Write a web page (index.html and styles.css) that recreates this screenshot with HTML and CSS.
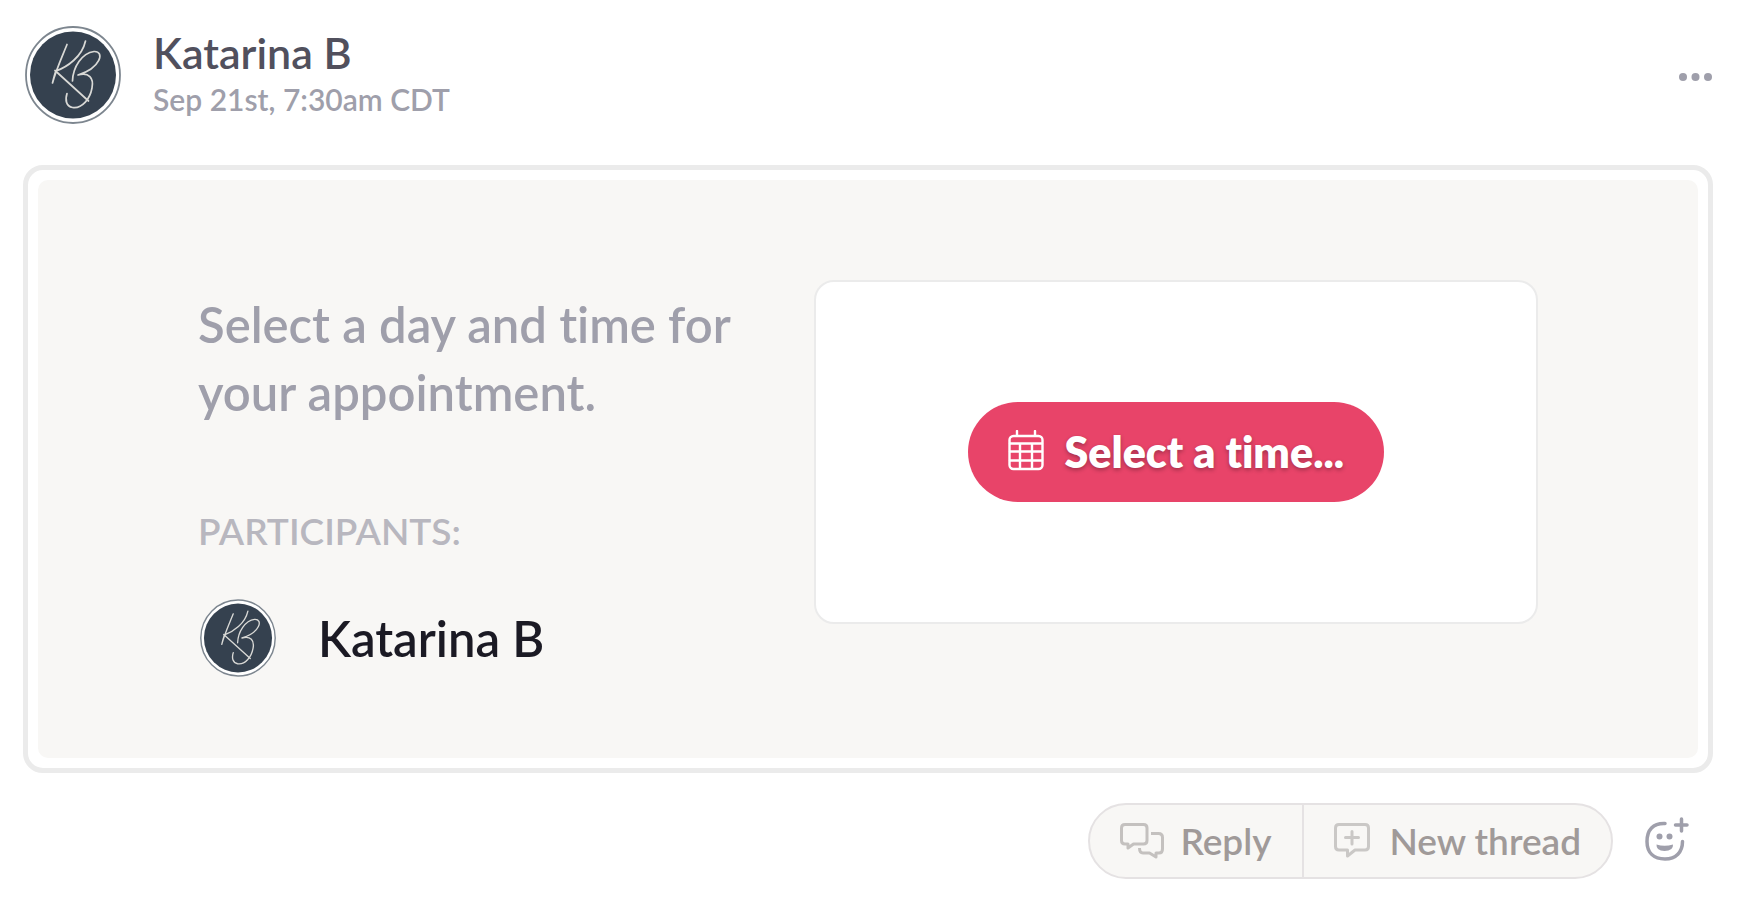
FILE: index.html
```html
<!doctype html>
<html lang="en">
<head>
    <meta charset="utf-8">
    <meta name="viewport" content="width=device-width, initial-scale=1">
    <title>Katarina B</title>
    <link rel="stylesheet" href="styles.css">
</head>
<body>
    <!-- shared monogram, used by both avatars -->
    <svg class="sprite" aria-hidden="true">
        <symbol id="monogram" viewBox="0 0 96 98">
            <ellipse cx="48" cy="49" rx="48" ry="49" fill="#fff"/>
            <ellipse cx="48" cy="49" rx="47" ry="48" fill="none" stroke="#7d868f" stroke-width="1.8"/>
            <ellipse cx="48" cy="49" rx="43" ry="43.5" fill="#35414f"/>
            <g fill="none" stroke="#d9d9d6" stroke-width="1.7" stroke-linecap="round" stroke-linejoin="round">
                <path d="M42 18.500C37 31 31 44 27.500 57C29 51 30 47 31 45C42 41 57 31 60.500 15"/>
                <path d="M30 44.500L63.500 75"/>
                <path d="M47.500 55C48 41 57 27 69 25.500C80 25 76 42 53 49C64 46 69 52 67 62C65 73 57 83 47.500 81.500C41 80 40 74 42 67.500"/>
            </g>
        </symbol>
    </svg>

    <article class="message">
        <header class="message__header">
            <svg class="avatar" role="img" aria-label="Katarina B"><use href="#monogram"/></svg>
            <div class="message__meta">
                <h2 class="message__author">Katarina B</h2>
                <time class="message__time">Sep 21st, 7:30am CDT</time>
            </div>
            <button type="button" class="more" aria-label="More options">
                <svg width="34" height="8" viewBox="0 0 34 8" fill="#9f9fab">
                    <circle cx="4" cy="4" r="4"/>
                    <circle cx="16.500" cy="4" r="4"/>
                    <circle cx="29" cy="4" r="4"/>
                </svg>
            </button>
        </header>

        <section class="card">
            <div class="card__inner">
                <div class="card__info">
                    <p class="card__prompt">Select a day and time for your appointment.</p>
                    <h3 class="card__label">PARTICIPANTS:</h3>
                    <div class="participant">
                        <svg class="avatar avatar--small" aria-hidden="true"><use href="#monogram"/></svg>
                        <span class="participant__name">Katarina B</span>
                    </div>
                </div>
                <div class="card__action">
                    <button type="button" class="select-time">
                        <svg width="36" height="44" viewBox="0 0 36 44" fill="none" stroke="#fff" stroke-width="2.400" stroke-linecap="round">
                            <rect x="1.500" y="6" width="33" height="33" rx="4"/>
                            <path d="M9 1V5M27 1V5M2 13.500H34M2 21.500H34M2 30.500H34M12 14V38.500M24 14V38.500"/>
                        </svg>
                        <span>Select a time...</span>
                    </button>
                </div>
            </div>
        </section>

        <footer class="actions">
            <div class="actions__group">
                <button type="button" class="actions__btn">
                    <svg width="44" height="36" viewBox="0 0 44 36" fill="none" stroke="#c4c1bf" stroke-width="3" stroke-linejoin="round" stroke-linecap="butt">
                        <path d="M5 1.500H23.500Q27 1.500 27 5V17.500Q27 21 23.500 21H13.500L8 25V21H5Q1.500 21 1.500 17.500V5Q1.500 1.500 5 1.500Z"/>
                        <path d="M31 10.500H38.500Q42.500 10.500 42.500 14.500V26Q42.500 30 39 30H36V34L29.500 30H23Q19.500 30 19.500 25"/>
                    </svg>
                    <span>Reply</span>
                </button>
                <button type="button" class="actions__btn">
                    <svg width="36" height="36" viewBox="0 0 36 36" fill="none" stroke="#cac8c6" stroke-width="3" stroke-linejoin="round" stroke-linecap="round">
                        <path d="M5 1.500H31Q34.500 1.500 34.500 5V23.500Q34.500 27 31 27H21L13.500 33V27H5Q1.500 27 1.500 23.500V5Q1.500 1.500 5 1.500Z"/>
                        <path d="M18 8.500V21M11.500 14.500H24.500"/>
                    </svg>
                    <span>New thread</span>
                </button>
            </div>
            <button type="button" class="react" aria-label="Add reaction">
                <svg width="44" height="44" viewBox="0 0 44 44" fill="none" stroke="#9f9fab" stroke-width="3.500" stroke-linecap="round">
                    <path d="M20 6.500C8 6 2 13 2 24.500C2 36 9 42 20 42C31 42 37.500 35 37.500 24.500"/>
                    <path d="M36.500 2V14M30.500 8H42"/>
                    <circle cx="14.500" cy="19.500" r="3" fill="#9f9fab" stroke="none"/>
                    <circle cx="24.500" cy="19.500" r="3" fill="#9f9fab" stroke="none"/>
                    <path d="M11.500 27.500Q19.500 30 28 27.500Q28.500 34 19.500 34Q11 34 11.500 27.500Z" fill="#9f9fab" stroke="none"/>
                </svg>
            </button>
        </footer>
    </article>
</body>
</html>
```
FILE: styles.css
```css
* {
    box-sizing: border-box;
}

body {
    margin: 0;
    background: #fff;
    font-family: Lato, "Liberation Sans", sans-serif;
    font-weight: 600;
    font-variant-ligatures: none;
}

button {
    margin: 0;
    padding: 0;
    border: 0;
    background: none;
    font: inherit;
    font-variant-ligatures: none;
    color: inherit;
    cursor: pointer;
}

svg {
    display: block;
    flex: none;
}

.sprite {
    position: absolute;
    width: 0;
    height: 0;
}

.message {
    padding: 24px 29px 24px 23px;
}

/*-------- Header --------*/

.message__header {
    display: flex;
    align-items: center;
    padding: 2px 0 0 2px;
    margin-bottom: 41px;
}

.avatar {
    width: 96px;
    height: 98px;
}

.avatar--small {
    width: 76px;
    height: 78px;
}

.message__meta {
    flex: 1;
    margin-left: 32px;
}

.message__author {
    margin: 0;
    font-size: 43px;
    line-height: 48px;
    font-weight: 600;
    color: #51505d;
}

.message__time {
    display: block;
    font-size: 30px;
    line-height: 44px;
    color: #9f9fab;
}

.more {
    padding: 12px 0 8px;
}

/*-------- Card --------*/

.card {
    border: 5px solid #ebebeb;
    border-radius: 20px;
    padding: 10px;
}

.card__inner {
    display: grid;
    grid-template-columns: 11fr 14fr;
    column-gap: 48px;
    align-items: start;
    padding: 100px 160px 81px;
    border-radius: 10px;
    background: #f8f7f5;
}

.card__prompt {
    margin: 10px 0 83px;
    font-size: 49px;
    line-height: 68px;
    color: #9f9fab;
}

.card__label {
    margin: 0 0 46px;
    font-size: 37px;
    line-height: 44px;
    font-weight: 600;
    color: #b8b7bf;
}

.participant {
    display: flex;
    align-items: center;
    gap: 42px;
    padding-left: 2px;
}

.participant__name {
    font-size: 49px;
    line-height: 52px;
    color: #1b1a24;
}

.card__action {
    display: flex;
    justify-content: center;
    padding: 120px 24px;
    border: 2px solid #ebebeb;
    border-radius: 20px;
    background: #fff;
}

.select-time {
    display: flex;
    align-items: center;
    gap: 20px;
    height: 100px;
    padding: 0 40px;
    border-radius: 50px;
    background: #e84469;
    color: #fff;
    font-size: 43px;
    line-height: 48px;
    font-weight: 800;
    text-shadow: 0 2px 4px rgba(0, 0, 0, 0.3);
}

/*-------- Footer --------*/

.actions {
    display: flex;
    justify-content: flex-end;
    align-items: center;
    gap: 32px;
    margin-top: 30px;
    padding-right: 24px;
}

.actions__group {
    display: flex;
    height: 76px;
    border: 2px solid #e5e2e3;
    border-radius: 38px;
    background: #f8f7f5;
}

.actions__btn {
    display: flex;
    align-items: center;
    gap: 16px;
    padding: 0 30px;
    font-size: 37px;
    line-height: 44px;
    color: #a09a99;
}

.actions__btn + .actions__btn {
    gap: 20px;
    border-left: 2px solid #e5e2e3;
}

.react {
    margin-bottom: 4px;
}
```
